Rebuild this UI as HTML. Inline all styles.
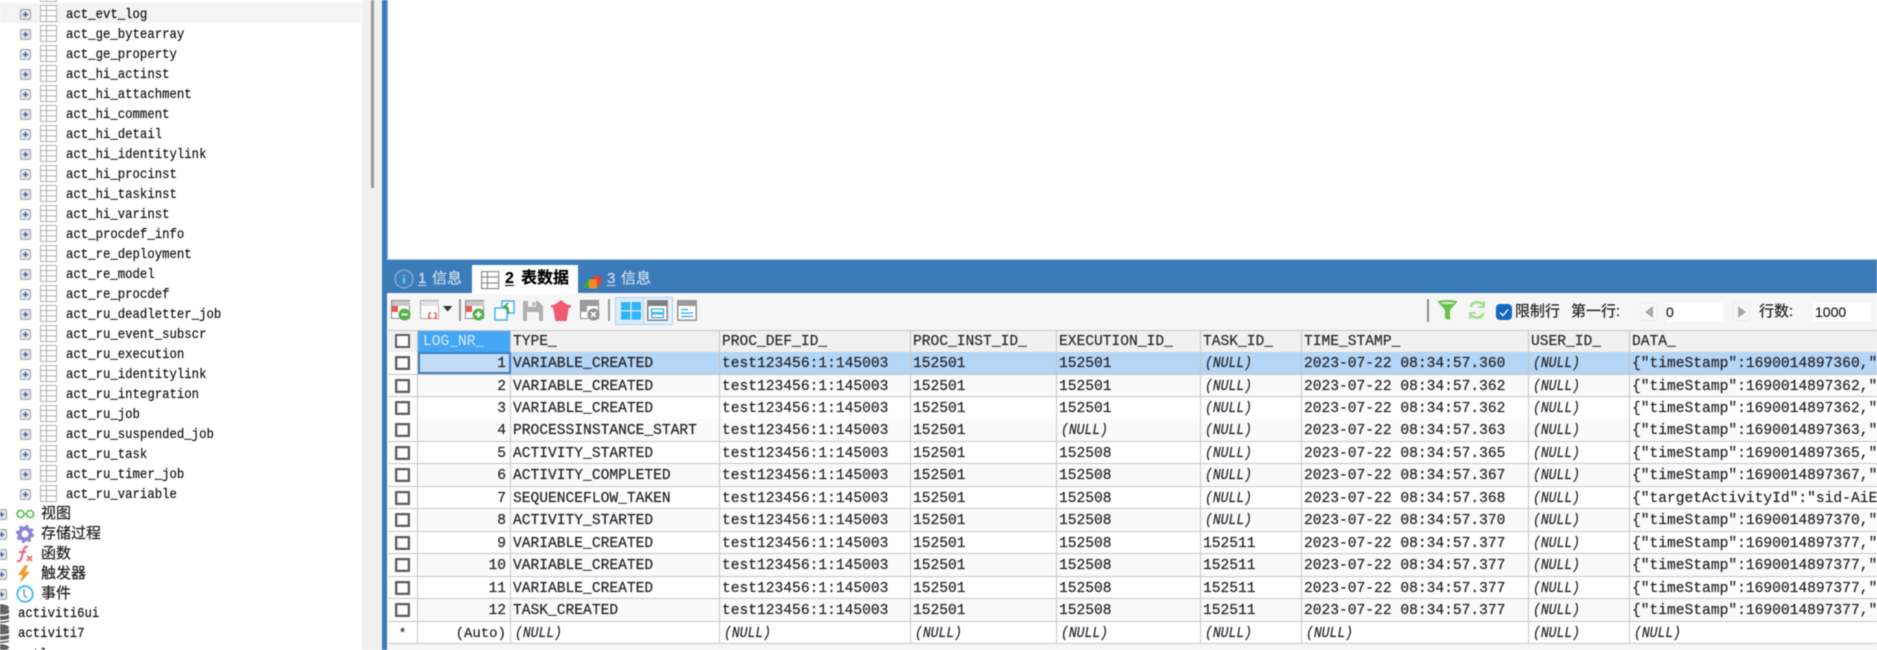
<!DOCTYPE html>
<html lang="zh"><head><meta charset="utf-8"><title>SQLyog</title>
<style>
html,body{margin:0;padding:0;background:#fff;width:1877px;height:650px;overflow:hidden}
#w{position:relative;width:1877px;height:650px;overflow:hidden;filter:blur(.45px);font-family:"Liberation Mono",monospace;color:#1f1f1f;-webkit-text-stroke:.2px currentColor}
#w div,#w svg,#w span.a{position:absolute}
.t{left:0;width:361px;height:20px}
.t i{position:absolute;left:66px;top:0;font-style:normal;font-size:14px;line-height:22px;transform:scaleX(.88);transform-origin:0 0;white-space:pre;color:#111}
.t svg.p{left:20px;top:5px}
.t svg.g{left:40px;top:1px}
.z{left:41px;font:15px/20px "Liberation Sans","Noto Sans CJK SC",sans-serif;color:#222;white-space:pre}
.d{left:18px;font-size:14px;line-height:21px;transform:scaleX(.88);transform-origin:0 0;color:#111;white-space:pre}
.tab{font:15px/20px "Liberation Sans","Noto Sans CJK SC",sans-serif;color:#cfdeee;white-space:pre}
.tab u{text-underline-offset:2px}
.lbl{font:15px/20px "Liberation Sans","Noto Sans CJK SC",sans-serif;color:#222;white-space:pre;top:302px}
.r,.hd{left:388px;width:1489px;height:22.5px;box-sizing:border-box;border-bottom:1.5px solid #c6c6c6;background:#fff}
.e{background:#fafafa}
.hd{top:330px;height:22.5px;background:#f0f0f0;border-top:1.5px solid #c6c6c6;border-bottom:1.5px solid #bdbdbd}
.r>b,.hd>b{position:absolute;top:0;height:100%;box-sizing:border-box;border-right:1.5px solid #c6c6c6;font-weight:400;font-size:14.6px;line-height:24px;padding-left:2px;white-space:pre;overflow:hidden;color:#22222a}
.hd>b{line-height:23px;color:#2a2a2a}
.r>b:nth-child(1),.hd>b:nth-child(1){left:0;width:30px;padding:0;background:#fff}
.r>b:nth-child(2),.hd>b:nth-child(2){left:30px;width:93px}
.r>b:nth-child(3),.hd>b:nth-child(3){left:123px;width:209px}
.r>b:nth-child(4),.hd>b:nth-child(4){left:332px;width:191px}
.r>b:nth-child(5),.hd>b:nth-child(5){left:523px;width:146px}
.r>b:nth-child(6),.hd>b:nth-child(6){left:669px;width:144px}
.r>b:nth-child(7),.hd>b:nth-child(7){left:813px;width:101px}
.r>b:nth-child(8),.hd>b:nth-child(8){left:914px;width:227px}
.r>b:nth-child(9),.hd>b:nth-child(9){left:1141px;width:101px}
.r>b:nth-child(10),.hd>b:nth-child(10){left:1242px;width:247px;border-right:0}
.r>b:nth-child(2){text-align:right;padding:0 4px 0 0}
.r>b>em{display:inline-block;font-style:italic;font-size:15px;transform:scaleX(.87);transform-origin:0 0;margin-left:2px}
.r>b:first-child::after{content:"";position:absolute;left:7px;top:4px;width:11px;height:10px;border:2px solid #5c5c5c;background:#fff;box-shadow:inset 0 0 0 .5px #999}
.s,.s>b{background:#b4d5f5!important}
.s>b:first-child{background:#fff!important}
.hd>b.on{background:#45a6f5;color:#d8ecff;padding-left:5px;-webkit-text-stroke:0}
.r>b.cur{background:#c2dcf7!important;outline:2px solid #3f7fbb;outline-offset:-2px}
.st{background:#fff}
.st>b:first-child::after{display:none}
</style></head><body><div id="w">

<!-- top panel -->
<div style="left:388px;top:0;width:1489px;height:259px;background:#fff"></div>
<!-- scrollbar -->
<div style="left:362px;top:0;width:20px;height:650px;background:#f0f0f0"></div>
<div style="left:371px;top:0;width:3px;height:188px;background:#9a9a9a"></div>
<!-- blue frame -->
<div style="left:382px;top:0;width:5px;height:650px;background:#3b7bb8"></div>
<div style="left:387px;top:0;width:1px;height:259px;background:#8fbce6"></div>
<div style="left:387px;top:259px;width:1490px;height:34px;background:#3b7bb8"></div>
<div style="left:387px;top:259px;width:1490px;height:1px;background:#a9c5e0"></div>
<div style="left:387px;top:293px;width:1490px;height:357px;background:#f6f6f6"></div>

<svg width="0" height="0" style="left:0;top:0"><defs>
<g id="pl"><rect x=".5" y=".5" width="10" height="10" rx="1.5" fill="#dfe3e9" stroke="#a0a0a0"/><path d="M3 5.5h5M5.5 3v5" stroke="#33508f" stroke-width="1.2"/></g>
<g id="tb" fill="none" stroke="#b2b2b2"><rect x=".5" y=".5" width="16" height="16" fill="#fff"/><path d="M.5 5.5h16M.5 11h16M6.5 .5v16"/></g>
</defs></svg>

<!-- tree -->
<div style="left:0;top:3px;width:361px;height:20px;background:#f3f3f3"></div>
<div class="t" style="top:-16px"><svg class="p" width="11" height="11"><use href="#pl"/></svg><svg class="g" width="17" height="17"><use href="#tb"/></svg></div>
<div class="t" style="top:4px"><svg class="p" width="11" height="11"><use href="#pl"/></svg><svg class="g" width="17" height="17"><use href="#tb"/></svg><i>act_evt_log</i></div>
<div class="t" style="top:24px"><svg class="p" width="11" height="11"><use href="#pl"/></svg><svg class="g" width="17" height="17"><use href="#tb"/></svg><i>act_ge_bytearray</i></div>
<div class="t" style="top:44px"><svg class="p" width="11" height="11"><use href="#pl"/></svg><svg class="g" width="17" height="17"><use href="#tb"/></svg><i>act_ge_property</i></div>
<div class="t" style="top:64px"><svg class="p" width="11" height="11"><use href="#pl"/></svg><svg class="g" width="17" height="17"><use href="#tb"/></svg><i>act_hi_actinst</i></div>
<div class="t" style="top:84px"><svg class="p" width="11" height="11"><use href="#pl"/></svg><svg class="g" width="17" height="17"><use href="#tb"/></svg><i>act_hi_attachment</i></div>
<div class="t" style="top:104px"><svg class="p" width="11" height="11"><use href="#pl"/></svg><svg class="g" width="17" height="17"><use href="#tb"/></svg><i>act_hi_comment</i></div>
<div class="t" style="top:124px"><svg class="p" width="11" height="11"><use href="#pl"/></svg><svg class="g" width="17" height="17"><use href="#tb"/></svg><i>act_hi_detail</i></div>
<div class="t" style="top:144px"><svg class="p" width="11" height="11"><use href="#pl"/></svg><svg class="g" width="17" height="17"><use href="#tb"/></svg><i>act_hi_identitylink</i></div>
<div class="t" style="top:164px"><svg class="p" width="11" height="11"><use href="#pl"/></svg><svg class="g" width="17" height="17"><use href="#tb"/></svg><i>act_hi_procinst</i></div>
<div class="t" style="top:184px"><svg class="p" width="11" height="11"><use href="#pl"/></svg><svg class="g" width="17" height="17"><use href="#tb"/></svg><i>act_hi_taskinst</i></div>
<div class="t" style="top:204px"><svg class="p" width="11" height="11"><use href="#pl"/></svg><svg class="g" width="17" height="17"><use href="#tb"/></svg><i>act_hi_varinst</i></div>
<div class="t" style="top:224px"><svg class="p" width="11" height="11"><use href="#pl"/></svg><svg class="g" width="17" height="17"><use href="#tb"/></svg><i>act_procdef_info</i></div>
<div class="t" style="top:244px"><svg class="p" width="11" height="11"><use href="#pl"/></svg><svg class="g" width="17" height="17"><use href="#tb"/></svg><i>act_re_deployment</i></div>
<div class="t" style="top:264px"><svg class="p" width="11" height="11"><use href="#pl"/></svg><svg class="g" width="17" height="17"><use href="#tb"/></svg><i>act_re_model</i></div>
<div class="t" style="top:284px"><svg class="p" width="11" height="11"><use href="#pl"/></svg><svg class="g" width="17" height="17"><use href="#tb"/></svg><i>act_re_procdef</i></div>
<div class="t" style="top:304px"><svg class="p" width="11" height="11"><use href="#pl"/></svg><svg class="g" width="17" height="17"><use href="#tb"/></svg><i>act_ru_deadletter_job</i></div>
<div class="t" style="top:324px"><svg class="p" width="11" height="11"><use href="#pl"/></svg><svg class="g" width="17" height="17"><use href="#tb"/></svg><i>act_ru_event_subscr</i></div>
<div class="t" style="top:344px"><svg class="p" width="11" height="11"><use href="#pl"/></svg><svg class="g" width="17" height="17"><use href="#tb"/></svg><i>act_ru_execution</i></div>
<div class="t" style="top:364px"><svg class="p" width="11" height="11"><use href="#pl"/></svg><svg class="g" width="17" height="17"><use href="#tb"/></svg><i>act_ru_identitylink</i></div>
<div class="t" style="top:384px"><svg class="p" width="11" height="11"><use href="#pl"/></svg><svg class="g" width="17" height="17"><use href="#tb"/></svg><i>act_ru_integration</i></div>
<div class="t" style="top:404px"><svg class="p" width="11" height="11"><use href="#pl"/></svg><svg class="g" width="17" height="17"><use href="#tb"/></svg><i>act_ru_job</i></div>
<div class="t" style="top:424px"><svg class="p" width="11" height="11"><use href="#pl"/></svg><svg class="g" width="17" height="17"><use href="#tb"/></svg><i>act_ru_suspended_job</i></div>
<div class="t" style="top:444px"><svg class="p" width="11" height="11"><use href="#pl"/></svg><svg class="g" width="17" height="17"><use href="#tb"/></svg><i>act_ru_task</i></div>
<div class="t" style="top:464px"><svg class="p" width="11" height="11"><use href="#pl"/></svg><svg class="g" width="17" height="17"><use href="#tb"/></svg><i>act_ru_timer_job</i></div>
<div class="t" style="top:484px"><svg class="p" width="11" height="11"><use href="#pl"/></svg><svg class="g" width="17" height="17"><use href="#tb"/></svg><i>act_ru_variable</i></div>

<svg style="left:-4px;top:509px" width="11" height="11"><use href="#pl"/></svg>
<svg style="left:-4px;top:529px" width="11" height="11"><use href="#pl"/></svg>
<svg style="left:-4px;top:549px" width="11" height="11"><use href="#pl"/></svg>
<svg style="left:-4px;top:569px" width="11" height="11"><use href="#pl"/></svg>
<svg style="left:-4px;top:589px" width="11" height="11"><use href="#pl"/></svg>
<svg style="left:16px;top:508px" width="19" height="12" fill="none" stroke="#6cc86a" stroke-width="2"><circle cx="4.5" cy="6" r="3.5"/><circle cx="14" cy="6" r="3.5"/><path d="M8 6h2.5"/></svg>
<div class="z" style="top:504px">视图</div>
<svg style="left:16px;top:525px" width="18" height="18"><circle cx="9" cy="9" r="5.5" fill="none" stroke="#8c86d6" stroke-width="4"/><circle cx="9" cy="9" r="8" fill="none" stroke="#8c86d6" stroke-width="2.4" stroke-dasharray="3 3.3"/></svg>
<div class="z" style="top:524px">存储过程</div>
<svg style="left:16px;top:545px" width="18" height="18" fill="none" stroke="#e9607a" stroke-width="2"><path d="M1 16c3 1 4-1 5-5l2-7c.6-2 2-3 4-2M3 7h7"/><path d="M11 11l5 5M16 11l-5 5" stroke="#ee7a6a"/></svg>
<div class="z" style="top:544px">函数</div>
<svg style="left:17px;top:565px" width="14" height="18"><path d="M8 0L1 10h4.5L3 18l10-11H8l3-7z" fill="#f7992b"/></svg>
<div class="z" style="top:564px">触发器</div>
<svg style="left:16px;top:585px" width="18" height="18" fill="none" stroke="#41b6f6"><circle cx="9" cy="9" r="7.8" stroke-width="1.8"/><path d="M8 4v6l3 3" stroke-width="1.5" stroke="#5b9fd0"/></svg>
<div class="z" style="top:584px">事件</div>

<svg style="left:-10px;top:604px" width="19" height="60" fill="#626262"><ellipse cx="9.5" cy="3.5" rx="9.5" ry="3.4"/><path d="M0 5c2 2 17 2 19 0v4c-2 2-17 2-19 0zM0 10.5c2 2 17 2 19 0v4c-2 2-17 2-19 0zM0 16c2 2 17 2 19 0v1.5c-2 2-17 2-19 0z"/><ellipse cx="9.5" cy="23.5" rx="9.5" ry="3.4"/><path d="M0 25c2 2 17 2 19 0v4c-2 2-17 2-19 0zM0 30.5c2 2 17 2 19 0v4c-2 2-17 2-19 0zM0 36c2 2 17 2 19 0v1.5c-2 2-17 2-19 0z"/><ellipse cx="9.5" cy="43.5" rx="9.5" ry="3.4"/></svg>
<div class="d" style="top:604px">activiti6ui</div>
<div class="d" style="top:624px">activiti7</div>
<div class="d" style="top:645px">cctl</div>

<!-- tabs -->
<svg style="left:394px;top:269px" width="20" height="20"><circle cx="10" cy="10" r="9" fill="#3f7fba" stroke="#86a8c8" stroke-width="1.5"/><path d="M10 5.5v1.8M10 8.8v5.7" stroke="#6fc1f0" stroke-width="2.2"/></svg>
<div class="tab" style="left:418px;top:269px"><u>1</u></div>
<div class="tab" style="left:432px;top:269px">信息</div>
<div style="left:472px;top:265px;width:106px;height:29px;background:#fff"></div>
<svg style="left:481px;top:271px" width="19" height="19" fill="none" stroke="#8f8f8f" stroke-width="1.2"><rect x=".6" y=".6" width="17" height="17" fill="#fff"/><path d="M.5 6h17M.5 12h17M6.5 .5v17"/></svg>
<div class="tab" style="left:505px;top:268px;color:#000;font-weight:700;font-size:16px;line-height:21px"><u>2</u></div>
<div class="tab" style="left:521px;top:268px;color:#000;font-weight:700;font-size:16px;line-height:21px">表数据</div>
<svg style="left:583px;top:275px" width="20" height="14"><path d="M0 13L6 3l6 10z" fill="#3fa84a"/><circle cx="14" cy="5.4" r="5" fill="#e2403c"/><rect x="6" y="4.5" width="8" height="9" fill="#f08c1c"/></svg>
<div class="tab" style="left:607px;top:269px"><u>3</u></div>
<div class="tab" style="left:621px;top:269px">信息</div>

<!-- toolbar -->
<svg style="left:391px;top:300px" width="21" height="21"><rect x=".5" y=".5" width="18" height="18" fill="#fff" stroke="#8a8a8a"/><path d="M1 1h18v5H1z" fill="#c8c8c8"/><path d="M1 6h6v6H1z" fill="#ea5a50"/><circle cx="13.5" cy="14.5" r="6" fill="#55b24c"/><path d="M10.5 14.5h6" stroke="#fff" stroke-width="2"/></svg>
<svg style="left:420px;top:300px" width="21" height="21"><rect x=".5" y=".5" width="18" height="18" fill="#fff" stroke="#aaa"/><path d="M1 1h18v5H1z" fill="#e2e2e2"/><path d="M9 13v5h2M16 13v5h-2M9 13h2M16 13h-2" fill="none" stroke="#f0523c" stroke-width="1.4"/></svg>
<svg style="left:443px;top:306px" width="10" height="6"><path d="M0 0h9.4L4.7 5.5z" fill="#333"/></svg>
<div style="left:459px;top:299px;width:1.5px;height:22px;background:#9a9a9a"></div>
<svg style="left:465px;top:300px" width="21" height="21"><rect x=".5" y=".5" width="18" height="18" fill="#fff" stroke="#8a8a8a"/><path d="M1 1h18v5H1z" fill="#c8c8c8"/><path d="M1 6h6v6H1z" fill="#ea5a50"/><circle cx="13.5" cy="14.5" r="6" fill="#55b24c"/><path d="M10.5 14.5h6M13.5 11.5v6" stroke="#fff" stroke-width="2"/></svg>
<svg style="left:494px;top:300px" width="22" height="21" fill="none"><rect x="8" y="1" width="12" height="12" stroke="#3fb2f4" stroke-width="1.5" fill="#fff"/><rect x="1" y="8" width="12" height="12" stroke="#3fb2f4" stroke-width="1.5" fill="#fff"/><path d="M14 3l-4 4 4 3M10 7c3-1 5 1 4 7" stroke="#55a04c" stroke-width="1.8"/></svg>
<svg style="left:523px;top:301px" width="20" height="20"><path d="M0 0h15l5 5v15H0z" fill="#b0b0b0"/><rect x="5" y="0" width="8" height="6" fill="#f6f6f6"/><rect x="9.5" y="1" width="2.4" height="4" fill="#b0b0b0"/><rect x="4" y="11" width="12" height="9" fill="#f6f6f6"/></svg>
<svg style="left:551px;top:300px" width="20" height="21"><path d="M0 5h20v2.5H0zM7 2.5L9 .5h2l2 2 4 2.5H3z" fill="#ee5a70"/><path d="M2 7h16l-2.5 14h-11z" fill="#ee5a70"/></svg>
<svg style="left:580px;top:300px" width="21" height="21"><rect x=".5" y=".5" width="18" height="18" fill="#fff" stroke="#8a8a8a"/><path d="M1 1h18v5H1zM1 6h6v6H1z" fill="#9c9c9c"/><circle cx="13.5" cy="14.5" r="6" fill="#8f8f8f"/><path d="M11 12l5 5M16 12l-5 5" stroke="#fff" stroke-width="1.6"/></svg>
<div style="left:608px;top:299px;width:1.5px;height:22px;background:#9a9a9a"></div>
<div style="left:615px;top:297px;width:27px;height:26px;background:#dcecfb;border:1px solid #a9d0f5"></div>
<svg style="left:621px;top:302px" width="20" height="18" fill="#31b4f8"><rect width="9.3" height="8.2"/><rect x="10.7" width="9.3" height="8.2"/><rect y="9.5" width="9.3" height="8.2"/><rect x="10.7" y="9.5" width="9.3" height="8.2"/></svg>
<div style="left:643px;top:297px;width:28px;height:26px;background:#e8f1fa;border:1px solid #a9d0f5"></div>
<svg style="left:647px;top:300px" width="21" height="21" fill="none"><rect x=".8" y=".8" width="19.4" height="19.4" fill="#fff" stroke="#808080" stroke-width="1.5"/><rect x="1" y="1" width="19" height="5" fill="#808080"/><rect x="4.5" y="9" width="12" height="3.6" stroke="#31a8ee" stroke-width="1.2"/><rect x="4.5" y="14" width="12" height="3.6" stroke="#31a8ee" stroke-width="1.2"/></svg>
<svg style="left:677px;top:300px" width="20" height="21" fill="none"><rect x=".8" y=".8" width="18.4" height="19.4" fill="#fff" stroke="#8a8a8a" stroke-width="1.4"/><rect x="1" y="1" width="18" height="5" fill="#9a9a9a"/><path d="M4 9.5h7M4 13h12M4 16.5h12" stroke="#31a8ee" stroke-width="1.3"/></svg>

<div style="left:1427px;top:299px;width:1.5px;height:23px;background:#8f8f8f"></div>
<svg style="left:1437px;top:300px" width="21" height="21"><path d="M.5 1.5C4 -.5 17 -.5 20.5 1.5L13 10v10l-5-1.5V10z" fill="#69c04c"/><ellipse cx="10.5" cy="3" rx="7" ry="1.3" fill="#c6ecb8"/></svg>
<svg style="left:1468px;top:301px" width="18" height="18" fill="none" stroke="#a3dc8f" stroke-width="2.6"><path d="M16 5C13 0 5 0 3 5v1M2 13c3 5 11 5 13 0v-1"/><path d="M10 6h6V0M8 12H2v6" stroke-width="1.8"/></svg>
<div style="left:1496px;top:304px;width:16px;height:16px;border-radius:4px;background:#1467c2"></div>
<svg style="left:1499px;top:308px" width="10" height="9" fill="none" stroke="#fff" stroke-width="1.3"><path d="M1 4.5l3 3L9 1.5"/></svg>
<div class="lbl" style="left:1515px">限制行</div>
<div class="lbl" style="left:1571px">第一行:</div>
<div style="left:1640px;top:302px;width:18px;height:19px;background:#f7f7f7;border:1px solid #ebebeb;border-radius:4px;box-sizing:border-box"></div>
<svg style="left:1645px;top:306px" width="9" height="12"><path d="M8 0v12L0 6z" fill="#a8a8a8"/></svg>
<div style="left:1666px;top:303px;width:57px;height:19px;background:#fff"></div>
<div style="left:1666px;top:303px;font:14px/19px 'Liberation Sans',sans-serif;color:#222">0</div>
<div style="left:1732px;top:302px;width:18px;height:19px;background:#f7f7f7;border:1px solid #ebebeb;border-radius:4px;box-sizing:border-box"></div>
<svg style="left:1738px;top:306px" width="9" height="12"><path d="M0 0v12l8-6z" fill="#a8a8a8"/></svg>
<div class="lbl" style="left:1759px">行数:</div>
<div style="left:1813px;top:303px;width:58px;height:19px;background:#fff"></div>
<div style="left:1815px;top:303px;font:14px/19px 'Liberation Sans',sans-serif;color:#222">1000</div>

<!-- grid -->
<div class="hd"><b style="background:#f0f0f0"></b><b class="on">LOG_NR_</b><b>TYPE_</b><b>PROC_DEF_ID_</b><b>PROC_INST_ID_</b><b>EXECUTION_ID_</b><b>TASK_ID_</b><b>TIME_STAMP_</b><b>USER_ID_</b><b>DATA_</b></div>
<div style="left:395px;top:334px;width:11px;height:10px;border:2px solid #5c5c5c;background:#fff;z-index:2"></div>

<div class="r s" style="top:352px"><b></b><b class="cur">1</b><b>VARIABLE_CREATED</b><b>test123456:1:145003</b><b>152501</b><b>152501</b><b><em>(NULL)</em></b><b>2023-07-22 08:34:57.360</b><b><em>(NULL)</em></b><b>{"timeStamp":1690014897360,"processDefinitionId"</b></div>
<div class="r e" style="top:374.5px"><b></b><b>2</b><b>VARIABLE_CREATED</b><b>test123456:1:145003</b><b>152501</b><b>152501</b><b><em>(NULL)</em></b><b>2023-07-22 08:34:57.362</b><b><em>(NULL)</em></b><b>{"timeStamp":1690014897362,"processDefinitionId"</b></div>
<div class="r" style="top:397px"><b></b><b>3</b><b>VARIABLE_CREATED</b><b>test123456:1:145003</b><b>152501</b><b>152501</b><b><em>(NULL)</em></b><b>2023-07-22 08:34:57.362</b><b><em>(NULL)</em></b><b>{"timeStamp":1690014897362,"processDefinitionId"</b></div>
<div class="r e" style="top:419.4px"><b></b><b>4</b><b>PROCESSINSTANCE_START</b><b>test123456:1:145003</b><b>152501</b><b><em>(NULL)</em></b><b><em>(NULL)</em></b><b>2023-07-22 08:34:57.363</b><b><em>(NULL)</em></b><b>{"timeStamp":1690014897363,"processDefinitionId"</b></div>
<div class="r" style="top:441.9px"><b></b><b>5</b><b>ACTIVITY_STARTED</b><b>test123456:1:145003</b><b>152501</b><b>152508</b><b><em>(NULL)</em></b><b>2023-07-22 08:34:57.365</b><b><em>(NULL)</em></b><b>{"timeStamp":1690014897365,"processDefinitionId"</b></div>
<div class="r e" style="top:464.4px"><b></b><b>6</b><b>ACTIVITY_COMPLETED</b><b>test123456:1:145003</b><b>152501</b><b>152508</b><b><em>(NULL)</em></b><b>2023-07-22 08:34:57.367</b><b><em>(NULL)</em></b><b>{"timeStamp":1690014897367,"processDefinitionId"</b></div>
<div class="r" style="top:486.8px"><b></b><b>7</b><b>SEQUENCEFLOW_TAKEN</b><b>test123456:1:145003</b><b>152501</b><b>152508</b><b><em>(NULL)</em></b><b>2023-07-22 08:34:57.368</b><b><em>(NULL)</em></b><b>{"targetActivityId":"sid-AiE1234567890","sourceA</b></div>
<div class="r e" style="top:509.3px"><b></b><b>8</b><b>ACTIVITY_STARTED</b><b>test123456:1:145003</b><b>152501</b><b>152508</b><b><em>(NULL)</em></b><b>2023-07-22 08:34:57.370</b><b><em>(NULL)</em></b><b>{"timeStamp":1690014897370,"processDefinitionId"</b></div>
<div class="r" style="top:531.8px"><b></b><b>9</b><b>VARIABLE_CREATED</b><b>test123456:1:145003</b><b>152501</b><b>152508</b><b>152511</b><b>2023-07-22 08:34:57.377</b><b><em>(NULL)</em></b><b>{"timeStamp":1690014897377,"processDefinitionId"</b></div>
<div class="r e" style="top:554.2px"><b></b><b>10</b><b>VARIABLE_CREATED</b><b>test123456:1:145003</b><b>152501</b><b>152508</b><b>152511</b><b>2023-07-22 08:34:57.377</b><b><em>(NULL)</em></b><b>{"timeStamp":1690014897377,"processDefinitionId"</b></div>
<div class="r" style="top:576.7px"><b></b><b>11</b><b>VARIABLE_CREATED</b><b>test123456:1:145003</b><b>152501</b><b>152508</b><b>152511</b><b>2023-07-22 08:34:57.377</b><b><em>(NULL)</em></b><b>{"timeStamp":1690014897377,"processDefinitionId"</b></div>
<div class="r e" style="top:599.2px"><b></b><b>12</b><b>TASK_CREATED</b><b>test123456:1:145003</b><b>152501</b><b>152508</b><b>152511</b><b>2023-07-22 08:34:57.377</b><b><em>(NULL)</em></b><b>{"timeStamp":1690014897377,"processDefinitionId"</b></div>
<div class="r st" style="top:621.6px"><b style="text-align:center;padding:0;font-size:13px">*</b><b style="padding-right:4px;font-size:14px">(Auto)</b><b><em>(NULL)</em></b><b><em>(NULL)</em></b><b><em>(NULL)</em></b><b><em>(NULL)</em></b><b><em>(NULL)</em></b><b><em>(NULL)</em></b><b><em>(NULL)</em></b><b><em>(NULL)</em></b></div>

</div></body></html>
